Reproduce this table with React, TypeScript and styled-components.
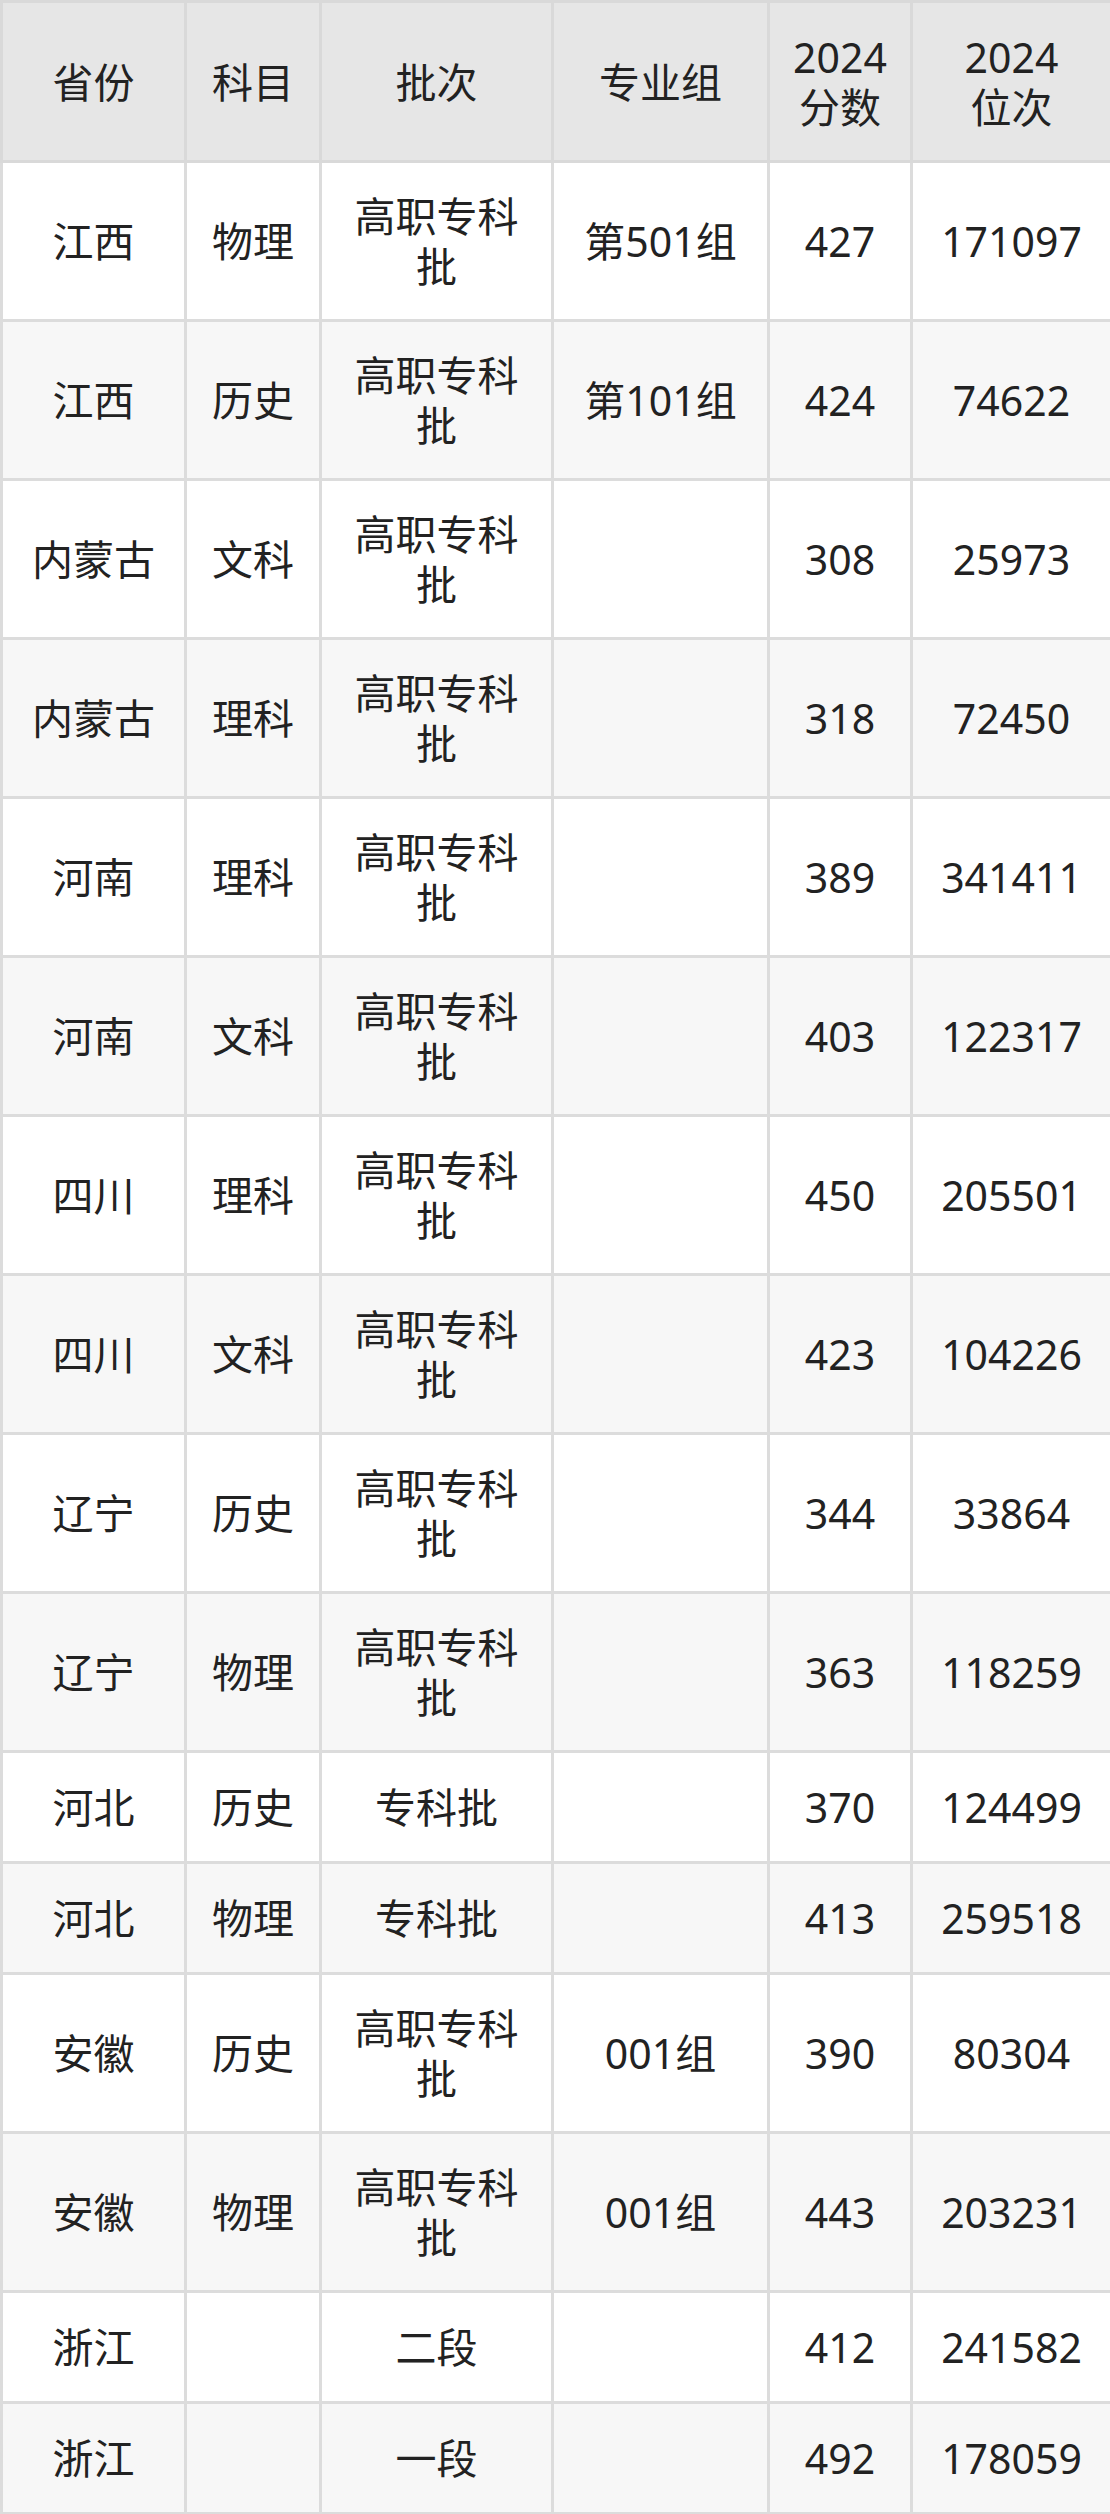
import React from "react";
import styled, { createGlobalStyle } from "styled-components";

const Global = createGlobalStyle`
  html, body { margin: 0; padding: 0; background: #ffffff; }
  body { font-family: "Noto Sans", "Noto Sans CJK SC", sans-serif; }
`;

const Table = styled.table`
  width: 1110px;
  table-layout: fixed;
  border-collapse: collapse;
  font-family: "Noto Sans", "Noto Sans CJK SC", sans-serif;
  font-size: 41px;
  line-height: 50px;
  color: #222222;
`;

const HeadRow = styled.tr`
  height: 160px;
  background: #e6e6e6;
`;

const Row = styled.tr<{ $short: boolean; $alt: boolean }>`
  height: ${(p) => (p.$short ? "111px" : "159px")};
  background: ${(p) => (p.$alt ? "#f7f7f7" : "#ffffff")};
`;

const Th = styled.th`
  border: 3px solid #d9d9d9;
  padding: 0 20px;
  font-weight: 400;
  text-align: center;
  vertical-align: middle;
`;

const Line = styled.span`
  display: block;
`;

const Td = styled.td`
  border: 3px solid #dcdcdc;
  padding: 0 20px;
  text-align: center;
  vertical-align: middle;
`;

const widths = [184, 135, 232, 216, 143, 200];

const rows: [string, string, string, string, string, string][] = [
  ["江西", "物理", "高职专科批", "第501组", "427", "171097"],
  ["江西", "历史", "高职专科批", "第101组", "424", "74622"],
  ["内蒙古", "文科", "高职专科批", "", "308", "25973"],
  ["内蒙古", "理科", "高职专科批", "", "318", "72450"],
  ["河南", "理科", "高职专科批", "", "389", "341411"],
  ["河南", "文科", "高职专科批", "", "403", "122317"],
  ["四川", "理科", "高职专科批", "", "450", "205501"],
  ["四川", "文科", "高职专科批", "", "423", "104226"],
  ["辽宁", "历史", "高职专科批", "", "344", "33864"],
  ["辽宁", "物理", "高职专科批", "", "363", "118259"],
  ["河北", "历史", "专科批", "", "370", "124499"],
  ["河北", "物理", "专科批", "", "413", "259518"],
  ["安徽", "历史", "高职专科批", "001组", "390", "80304"],
  ["安徽", "物理", "高职专科批", "001组", "443", "203231"],
  ["浙江", "", "二段", "", "412", "241582"],
  ["浙江", "", "一段", "", "492", "178059"],
];

const headers: string[][] = [
  ["省份"],
  ["科目"],
  ["批次"],
  ["专业组"],
  ["2024", "分数"],
  ["2024", "位次"],
];

export default function App() {
  return (
    <>
      <Global />
      <Table>
        <colgroup>
          {widths.map((w, i) => (
            <col key={i} style={{ width: w }} />
          ))}
        </colgroup>
        <thead>
          <HeadRow>
            {headers.map((h, i) => (
              <Th key={i}>
                {h.map((l) => (
                  <Line key={l}>{l}</Line>
                ))}
              </Th>
            ))}
          </HeadRow>
        </thead>
        <tbody>
          {rows.map((r, i) => (
            <Row key={i} $short={r[2].length <= 3} $alt={i % 2 === 1}>
              {r.map((c, j) => (
                <Td key={j}>{c}</Td>
              ))}
            </Row>
          ))}
        </tbody>
      </Table>
    </>
  );
}
